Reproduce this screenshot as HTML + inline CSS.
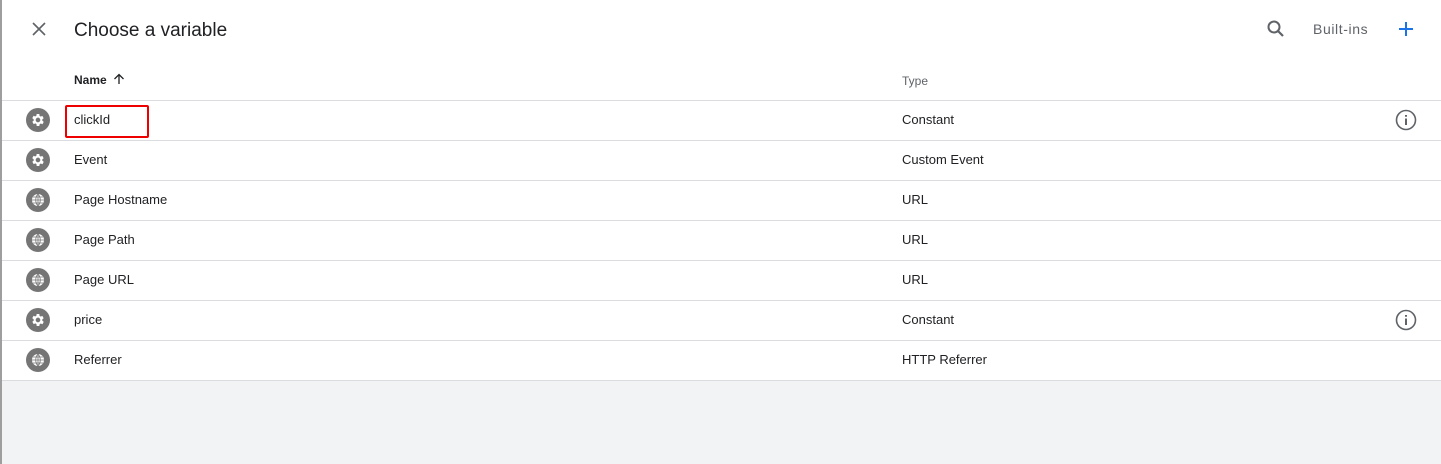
<!DOCTYPE html>
<html><head><style>
body{margin:0;width:1441px;height:464px;overflow:hidden;background:#f1f3f4;font-family:"Liberation Sans",Arial,sans-serif;position:relative}
.lb{position:absolute;left:0;top:0;width:2px;height:464px;background:#9e9e9e}
.panel{position:absolute;left:2px;top:0;width:1439px;height:380px;background:#fff}
.title{position:absolute;left:72px;top:20px;font-size:19px;color:#202124}
.hdr{position:absolute;top:73px;font-size:12px}
.row{position:absolute;left:0;width:1439px;height:40px;border-top:1px solid #dadce0;font-size:13px;color:#202124}
.row span{position:absolute;top:11px}
.ic{position:absolute;left:24px;top:7px;width:24px;height:24px;border-radius:50%;background:#757575}
.ic svg{position:absolute;left:4px;top:4px}
.info{position:absolute;left:1393px;top:8px}
</style></head><body>
<div class="lb"></div>
<div class="panel">
<svg style="position:absolute;left:28px;top:20px" width="18" height="18" viewBox="0 0 18 18"><path d="M3 3L15 15M15 3L3 15" stroke="#5f6368" stroke-width="1.6"/></svg>
<div class="title">Choose a variable</div>
<svg style="position:absolute;left:1264px;top:19px" width="20" height="20" viewBox="0 0 20 20"><circle cx="8" cy="8" r="5.5" fill="none" stroke="#5f6368" stroke-width="2"/><path d="M12 12L17 17" stroke="#5f6368" stroke-width="2.2"/></svg>
<div style="position:absolute;left:1311px;top:21px;font-size:14px;color:#5f6368;letter-spacing:.6px">Built-ins</div>
<svg style="position:absolute;left:1395px;top:20px" width="18" height="18" viewBox="0 0 18 18"><path d="M9 2V16M2 9H16" stroke="#1a73e8" stroke-width="2"/></svg>
<div class="hdr" style="left:72px;color:#202124;font-weight:bold">Name</div>
<svg style="position:absolute;left:111px;top:73px" width="12" height="12" viewBox="0 0 12 12"><path d="M6 11V1.5M1.5 6L6 1.5 10.5 6" stroke="#202124" stroke-width="1.3" fill="none"/></svg>
<div class="hdr" style="left:900px;color:#5f6368;top:74px">Type</div>

<div class="row" style="top:100px"><div class="ic"><svg width="16" height="16" viewBox="0 0 24 24"><path fill="#fff" d="M19.4 13a7.5 7.5 0 000-2l2.1-1.6-2-3.5-2.5 1a7 7 0 00-1.7-1L15 3h-4l-.4 2.7a7 7 0 00-1.7 1l-2.5-1-2 3.5L6.6 11a7.5 7.5 0 000 2l-2.1 1.6 2 3.5 2.5-1a7 7 0 001.7 1L11 21h4l.4-2.7a7 7 0 001.7-1l2.5 1 2-3.5zM13 15.5a3.5 3.5 0 110-7 3.5 3.5 0 010 7z" transform="translate(-1 0)"/></svg></div><span style="left:72px">clickId</span><span style="left:900px">Constant</span>
<div style="position:absolute;left:63px;top:4px;width:80px;height:29px;border:2px solid #e00;border-radius:2px"></div>
<svg class="info" width="22" height="22" viewBox="0 0 22 22"><circle cx="11" cy="11" r="9.5" fill="none" stroke="#5f6368" stroke-width="1.6"/><path d="M11 9.5V16M11 6V7.8" stroke="#5f6368" stroke-width="2"/></svg></div>

<div class="row" style="top:140px"><div class="ic"><svg width="16" height="16" viewBox="0 0 24 24"><path fill="#fff" d="M19.4 13a7.5 7.5 0 000-2l2.1-1.6-2-3.5-2.5 1a7 7 0 00-1.7-1L15 3h-4l-.4 2.7a7 7 0 00-1.7 1l-2.5-1-2 3.5L6.6 11a7.5 7.5 0 000 2l-2.1 1.6 2 3.5 2.5-1a7 7 0 001.7 1L11 21h4l.4-2.7a7 7 0 001.7-1l2.5 1 2-3.5zM13 15.5a3.5 3.5 0 110-7 3.5 3.5 0 010 7z" transform="translate(-1 0)"/></svg></div><span style="left:72px">Event</span><span style="left:900px">Custom Event</span></div>

<div class="row" style="top:180px"><div class="ic"><svg width="16" height="16" viewBox="0 0 16 16"><circle cx="8" cy="8" r="6" fill="#fff"/><path d="M2 8H14M8 2V14M3 5H13M3 11H13M8 2C5 5 5 11 8 14M8 2C11 5 11 11 8 14" stroke="#757575" stroke-width=".8" fill="none"/></svg></div><span style="left:72px">Page Hostname</span><span style="left:900px">URL</span></div>

<div class="row" style="top:220px"><div class="ic"><svg width="16" height="16" viewBox="0 0 16 16"><circle cx="8" cy="8" r="6" fill="#fff"/><path d="M2 8H14M8 2V14M3 5H13M3 11H13M8 2C5 5 5 11 8 14M8 2C11 5 11 11 8 14" stroke="#757575" stroke-width=".8" fill="none"/></svg></div><span style="left:72px">Page Path</span><span style="left:900px">URL</span></div>

<div class="row" style="top:260px"><div class="ic"><svg width="16" height="16" viewBox="0 0 16 16"><circle cx="8" cy="8" r="6" fill="#fff"/><path d="M2 8H14M8 2V14M3 5H13M3 11H13M8 2C5 5 5 11 8 14M8 2C11 5 11 11 8 14" stroke="#757575" stroke-width=".8" fill="none"/></svg></div><span style="left:72px">Page URL</span><span style="left:900px">URL</span></div>

<div class="row" style="top:300px"><div class="ic"><svg width="16" height="16" viewBox="0 0 24 24"><path fill="#fff" d="M19.4 13a7.5 7.5 0 000-2l2.1-1.6-2-3.5-2.5 1a7 7 0 00-1.7-1L15 3h-4l-.4 2.7a7 7 0 00-1.7 1l-2.5-1-2 3.5L6.6 11a7.5 7.5 0 000 2l-2.1 1.6 2 3.5 2.5-1a7 7 0 001.7 1L11 21h4l.4-2.7a7 7 0 001.7-1l2.5 1 2-3.5zM13 15.5a3.5 3.5 0 110-7 3.5 3.5 0 010 7z" transform="translate(-1 0)"/></svg></div><span style="left:72px">price</span><span style="left:900px">Constant</span>
<svg class="info" width="22" height="22" viewBox="0 0 22 22"><circle cx="11" cy="11" r="9.5" fill="none" stroke="#5f6368" stroke-width="1.6"/><path d="M11 9.5V16M11 6V7.8" stroke="#5f6368" stroke-width="2"/></svg></div>

<div class="row" style="top:340px;border-bottom:1px solid #dadce0;height:39px"><div class="ic"><svg width="16" height="16" viewBox="0 0 16 16"><circle cx="8" cy="8" r="6" fill="#fff"/><path d="M2 8H14M8 2V14M3 5H13M3 11H13M8 2C5 5 5 11 8 14M8 2C11 5 11 11 8 14" stroke="#757575" stroke-width=".8" fill="none"/></svg></div><span style="left:72px">Referrer</span><span style="left:900px">HTTP Referrer</span></div>
</div>
</body></html>
